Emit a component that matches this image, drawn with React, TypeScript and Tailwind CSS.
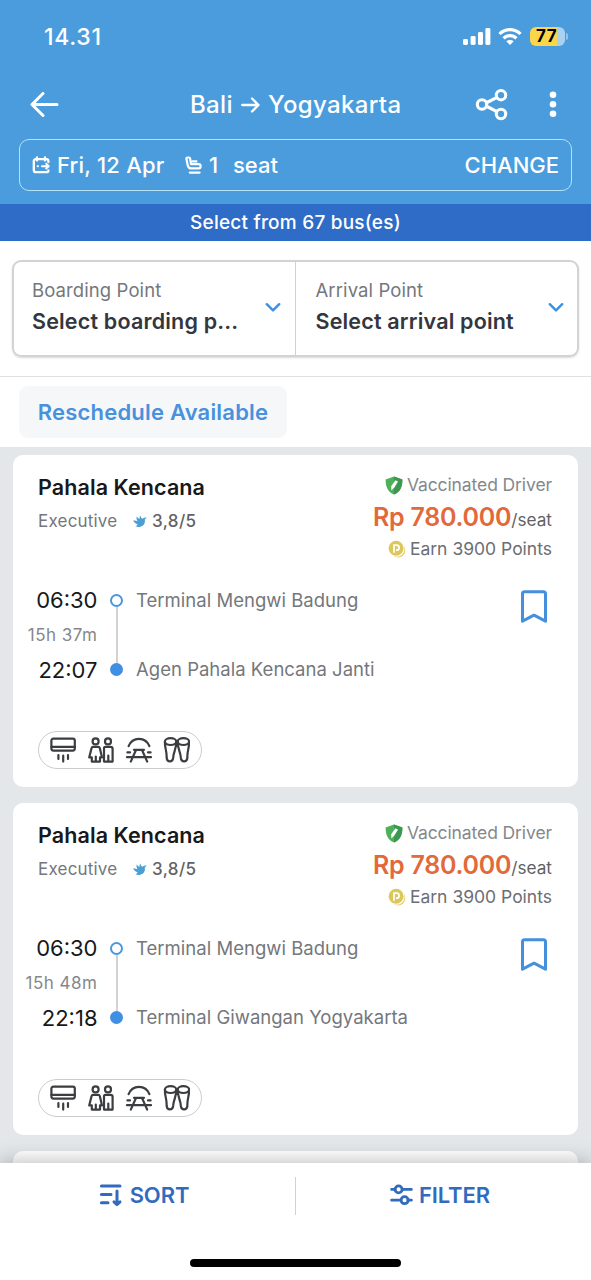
import type { ReactNode } from "react";

type Trip = {
  operator: string;
  busClass: string;
  rating: string;
  price: string;
  points: number;
  depart: string;
  arrive: string;
  duration: string;
  from: string;
  to: string;
};

const trips: Trip[] = [
  {
    operator: "Pahala Kencana",
    busClass: "Executive",
    rating: "3,8/5",
    price: "Rp 780.000",
    points: 3900,
    depart: "06:30",
    arrive: "22:07",
    duration: "15h 37m",
    from: "Terminal Mengwi Badung",
    to: "Agen Pahala Kencana Janti",
  },
  {
    operator: "Pahala Kencana",
    busClass: "Executive",
    rating: "3,8/5",
    price: "Rp 780.000",
    points: 3900,
    depart: "06:30",
    arrive: "22:18",
    duration: "15h 48m",
    from: "Terminal Mengwi Badung",
    to: "Terminal Giwangan Yogyakarta",
  },
];

function StatusBar() {
  return (
    <div className="flex h-[74px] items-center pl-11 pr-[23px] text-white">
      <span className="text-[23px] font-medium leading-7 tracking-[0.7px]">14.31</span>
      <div className="ml-auto flex items-center">
        <svg width="28" height="18" viewBox="0 0 28 18" fill="white">
          <rect x="0" y="11" width="5" height="6" rx="1.4" />
          <rect x="7.6" y="8" width="5" height="9" rx="1.4" />
          <rect x="15" y="4" width="5" height="13" rx="1.4" />
          <rect x="22.4" y="0" width="5" height="17" rx="1.4" />
        </svg>
        <svg className="ml-[7px]" width="24" height="18" viewBox="0 0 24 18" fill="none" stroke="white" strokeWidth="3.2">
          <path d="M1.5 6 C7.3 0.1 16.7 0.1 22.5 6" />
          <path d="M5.6 10.3 C9.2 6.7 14.8 6.7 18.4 10.3" />
          <path d="M12 17 L8.3 13.3 C10.4 11.4 13.6 11.4 15.7 13.3 Z" fill="white" stroke="none" />
        </svg>
        <div className="ml-[8px] flex items-center pb-px">
          <div className="flex h-[19px] w-[35px] items-center justify-center rounded-[6px] bg-linear-to-r from-[#fbd64b] from-77% to-[#a9d2f2] to-77% pr-[2px] text-[17px] font-bold leading-none tracking-[0.4px] text-black">
            77
          </div>
          <div className="ml-px h-[7px] w-[2px] rounded-r-full bg-[#93c4ec]" />
        </div>
      </div>
    </div>
  );
}

function Header() {
  return (
    <header className="h-[204px] bg-[#4a9cdc] text-white">
      <StatusBar />
      <div className="flex h-[62px] items-center pl-[30px] pr-[33px]">
        <svg width="29" height="26" viewBox="0 0 29 26" fill="none" stroke="white" strokeWidth="3" strokeLinecap="round" strokeLinejoin="round">
          <path d="M27 12.5 H2 M13 1.5 L2 12.5 L13 23.5" />
        </svg>
        <div className="ml-[131px] flex items-center text-[24px] font-medium leading-8 tracking-[0.35px]">
          <span className="w-[51px]">Bali</span>
          <svg width="19" height="16" viewBox="0 0 19 16" fill="none" stroke="white" strokeWidth="2.3" strokeLinecap="round" strokeLinejoin="round">
            <path d="M1.2 8 H17.5 M11 1.5 L17.5 8 L11 14.5" />
          </svg>
          <span className="ml-[8px]">Yogyakarta</span>
        </div>
        <svg className="ml-auto" width="34" height="34" viewBox="0 0 34 34" fill="none" stroke="white" strokeWidth="3.1">
          <path d="M11 15 L22 9.3 M11 18 L22 23.7" />
          <circle cx="7" cy="16.5" r="4.7" />
          <circle cx="26" cy="7.2" r="4.7" />
          <circle cx="26" cy="26" r="4.7" />
        </svg>
        <svg className="ml-[39px]" width="10" height="28" viewBox="0 0 10 28" fill="white">
          <circle cx="5" cy="3.8" r="3.3" />
          <circle cx="5" cy="13.3" r="3.3" />
          <circle cx="5" cy="22.8" r="3.3" />
        </svg>
      </div>
      <div className="mx-[19px] mt-[3px] flex h-[52px] items-center rounded-[10px] border border-[#b4e2f7] px-3 text-[22px] font-medium">
        <svg width="19" height="18" viewBox="0 0 19 18" fill="none" stroke="white" strokeWidth="2.3" strokeLinecap="round" strokeLinejoin="round">
          <path d="M16.4 6 V5.2 Q16.4 3.2 14.4 3.2 H3.8 Q1.8 3.2 1.8 5.2 V14 Q1.8 16.2 3.8 16.2 H14.4 Q16.4 16.2 16.4 14.4 M5 1.4 V4.6 M13 1.4 V4.6" />
          <path d="M10 10.2 H16.8 M14.2 7.8 L16.8 10.2 L14.2 12.6 M5.6 10.2 H6" strokeWidth="2" />
        </svg>
        <span className="ml-[6px] w-[128px] tracking-[0.2px]">Fri, 12 Apr</span>
        <svg width="17" height="19" viewBox="0 0 17 19" fill="none" stroke="white" strokeWidth="2.2" strokeLinecap="round" strokeLinejoin="round">
          <path d="M1.4 2.8 Q1.2 1.5 2.6 1.5 H4 Q5 1.5 5.2 2.8 L6 8.2 H13.6 Q15.6 8.2 15.6 10.2 Q15.6 12.4 13.6 12.4 H6.4 Q3.6 12.4 2.8 9.6 Z" />
          <path d="M7.4 5.4 H11.4 M4.8 16.6 H14.6" />
        </svg>
        <span className="ml-[7px] w-[24px]">1</span>
        <span>seat</span>
        <span className="ml-auto">CHANGE</span>
      </div>
    </header>
  );
}

function PointField({ label, value, className }: { label: string; value: string; className: string }) {
  return (
    <div className={`flex items-center pb-[3px] ${className}`}>
      <div className="min-w-0 flex-1 pb-[2px]">
        <div className="text-[18.5px] leading-6 tracking-[0.1px] text-[#74777c]">{label}</div>
        <div className="mt-[5px] whitespace-nowrap text-[21.5px] font-semibold leading-7 tracking-[0.18px] text-[#33363c]">{value}</div>
      </div>
      <svg width="16" height="10" viewBox="0 0 16 10" fill="none" stroke="#3f8fdf" strokeWidth="2.4" strokeLinecap="round" strokeLinejoin="round">
        <path d="M1.8 2.2 L8 8.4 L14.2 2.2" />
      </svg>
    </div>
  );
}

function ShieldIcon() {
  return (
    <svg width="18" height="19" viewBox="0 0 18 19">
      <path d="M9 0.5 L17.4 3.4 C17.4 11 15 16 9 18.5 C3 16 0.6 11 0.6 3.4 Z" fill="#4db257" />
      <path d="M9 0.5 L17.4 3.4 C17.4 11 15 16 9 18.5 Z" fill="#3c9850" />
      <path d="M6.4 14.6 L6.2 10.2 L10.4 4.2 L13 5.4 L9.4 11.4 Z" fill="white" />
    </svg>
  );
}

function PointsIcon() {
  return (
    <svg width="18" height="18" viewBox="0 0 18 18" fill="none">
      <circle cx="10" cy="10.4" r="7.2" fill="#e6cf62" />
      <circle cx="8.6" cy="8.8" r="7.9" fill="white" />
      <circle cx="8.1" cy="8.3" r="7.5" fill="#dcc85a" />
      <path d="M6 12.8 V5.2 H8.6 A2.5 2.5 0 0 1 8.6 10.2 H8" stroke="white" strokeWidth="1.7" />
    </svg>
  );
}

function BirdIcon() {
  return (
    <svg width="14" height="13" viewBox="0 0 14 13" fill="#4a9fd4">
      <path d="M0 5.6 Q2.4 5 4.6 6.2 Q3 4 3.6 1.4 Q5 3.2 6.6 4 Q6.2 2 7.2 0.4 Q8 2.8 9.4 3.8 Q11 2.2 13.8 2.4 L11.8 4.6 Q12.4 8.4 10 10.6 Q7 13 2.4 11.2 Q4 10.6 4.6 9.4 Q1.6 8.6 0 5.6 Z" />
    </svg>
  );
}

function Amenities() {
  return (
    <div className="ml-[25px] mt-12 flex h-[38px] w-[164px] items-center rounded-full border-[1.5px] border-[#cbcccd] pl-[11px]">
      <svg width="140" height="28" viewBox="0 0 140 28" fill="none" stroke="#3b3d40" strokeWidth="2.2" strokeLinecap="round" strokeLinejoin="round">
        {/* air conditioner */}
        <rect x="1.4" y="2.6" width="23.4" height="12" rx="2" />
        <path d="M1.4 10.8 H24.8 M8.4 19 V23 M13.2 19.6 V25.6 M18 19 V23" />
        {/* toilet */}
        <circle cx="45.6" cy="5.4" r="3" />
        <path d="M43 10.8 H48.2 Q49.4 10.8 49.8 12 L52 21.4 H50 V25.6 H41.8 V21.4 H39.2 L41.6 12 Q42 10.8 43 10.8 Z M45.8 20.6 V25.4" />
        <circle cx="58" cy="5.4" r="3" />
        <path d="M55.4 10.8 H60.6 Q62.6 10.8 62.6 12.8 V25.6 H54 V12.4 Q54 10.8 55.4 10.8 Z M58.3 19.6 V25.4" />
        {/* rest stop */}
        <path d="M78.6 10.2 C82.4 0.4 95.6 0.4 99.4 10.2 M84 13.8 H94 M77.4 16.4 H80 M98 16.4 H100.6 M77 21.2 H101 M86 14 L80.8 25.6 M92 14 L97.2 25.6" />
        {/* pillow and snacks */}
        <ellipse cx="120.6" cy="5.6" rx="5.7" ry="3.4" />
        <ellipse cx="133.4" cy="5.6" rx="5.7" ry="3.4" />
        <path d="M114.9 5.8 C114.6 12 117 15 116.6 21.4 C117 26.8 122.8 26.8 123.2 21.4 C123.4 16 126.4 13 126.3 5.8 M139.1 5.8 C139.4 12 137 15 137.4 21.4 C137 26.8 131.2 26.8 130.8 21.4 C130.6 16 127.6 13 127.7 5.8" />
      </svg>
    </div>
  );
}

function TripCard({ trip }: { trip: Trip }) {
  return (
    <article className="h-[332px] shrink-0 rounded-[10px] bg-white">
      <div className="flex h-[105px] justify-between pl-[25px] pr-[26px]">
        <div className="pt-[18px]">
          <h2 className="text-[21.5px] font-semibold leading-7 tracking-[0.1px] text-[#16181b]">{trip.operator}</h2>
          <div className="mt-[8px] flex items-center leading-6">
            <span className="w-[95px] text-[17px] tracking-[0.2px] text-[#74777c]">{trip.busClass}</span>
            <BirdIcon />
            <span className="ml-[5px] text-[17px] font-medium tracking-[0.4px] text-[#5f6267]">{trip.rating}</span>
          </div>
        </div>
        <div className="flex flex-col items-end pt-[18px]">
          <div className="flex items-center text-[17.5px] leading-6 tracking-[-0.1px] text-[#85888c]">
            <ShieldIcon />
            <span className="ml-1">Vaccinated Driver</span>
          </div>
          <div className="mt-[5px] flex h-[30px] items-baseline leading-[30px]">
            <span className="text-[25px] font-semibold tracking-[-0.25px] text-[#e2693a]">{trip.price}</span>
            <span className="text-[17.2px] text-[#5f6267]">/seat</span>
          </div>
          <div className="mt-[5px] flex items-center text-[17.5px] leading-6 text-[#6b6e73]">
            <PointsIcon />
            <span className="ml-1">Earn {trip.points} Points</span>
          </div>
        </div>
      </div>

      <div className="mt-[26px] flex h-[97px] pr-[30px]">
        <div className="w-[84.5px] text-right">
          <div className="text-[22px] leading-7 text-[#16181b]">{trip.depart}</div>
          <div className="mt-[9px] whitespace-nowrap text-[17px] leading-6 tracking-[0.5px] text-[#85888c]">{trip.duration}</div>
          <div className="mt-[9px] text-[22px] leading-7 text-[#16181b]">{trip.arrive}</div>
        </div>
        <div className="ml-[12.5px] flex w-[13px] flex-col items-center pb-[7px] pt-[8px]">
          <div className="size-[13px] shrink-0 rounded-full border-2 border-[#4a96df]" />
          <div className="w-[2px] flex-1 bg-[#d0d2d4]" />
          <div className="size-[13px] shrink-0 rounded-full bg-[#3f8fe4]" />
        </div>
        <div className="ml-[13px] flex flex-1 flex-col justify-between text-[18.5px] leading-7 tracking-[0.02px] text-[#74777c]">
          <span>{trip.from}</span>
          <span>{trip.to}</span>
        </div>
        <svg className="mt-[3px]" width="28" height="35" viewBox="0 0 28 35" fill="none" stroke="#4590dc" strokeWidth="3" strokeLinejoin="round">
          <path d="M2.5 4.8 Q2.5 2.7 4.6 2.7 H23.4 Q25.5 2.7 25.5 4.8 V32.2 L14 26.2 L2.5 32.2 Z" />
        </svg>
      </div>
      <Amenities />
    </article>
  );
}

function FooterButton({ label, children }: { label: string; children: ReactNode }) {
  return (
    <button className="flex flex-1 items-center justify-center gap-[6px] pb-[2px] pr-[7px] text-[22px] font-semibold leading-7 tracking-[-0.1px] text-[#326bbd]">
      {children}
      <span>{label}</span>
    </button>
  );
}

export default function App() {
  return (
    <div className="flex h-[1280px] w-[591px] flex-col overflow-hidden bg-[#e4e7ea] font-[Inter,'Liberation_Sans',sans-serif]">
      <Header />
      <div className="flex h-[37px] items-center justify-center bg-[#2f6cc7] pt-[2px] text-[19px] font-medium tracking-[0.22px] text-white">
        Select from 67 bus(es)
      </div>

      <section className="h-[136px] border-b border-[#dfe0e1] bg-white px-[12px] pt-[19px]">
        <div className="flex h-[97px] rounded-[9px] border-2 border-[#d2d3d4] shadow-[0_1px_2px_rgba(0,0,0,0.15)]">
          <PointField label="Boarding Point" value="Select boarding p..." className="w-[282px] border-r border-[#cfd0d1] pl-[18px] pr-[14px]" />
          <PointField label="Arrival Point" value="Select arrival point" className="flex-1 pl-[19.5px] pr-[13px]" />
        </div>
      </section>

      <section className="flex h-[70px] items-center bg-white pl-[19px]">
        <button className="h-[52px] w-[268px] rounded-[9px] bg-[#f6f7f9] text-[22px] font-semibold tracking-[0.2px] text-[#4791dd]">
          Reschedule Available
        </button>
      </section>

      <main className="flex h-[716px] flex-col gap-4 overflow-hidden px-[13px] pt-2">
        {trips.map((trip) => (
          <TripCard key={trip.arrive} trip={trip} />
        ))}
        <article className="h-[332px] shrink-0 rounded-[10px] bg-white" />
      </main>

      <footer className="relative h-[117px] shrink-0 bg-white shadow-[0_0_20px_rgba(0,0,0,0.3)]">
        <div className="flex h-[65px] items-center">
          <FooterButton label="SORT">
            <svg width="25" height="24" viewBox="0 0 25 24" fill="none" stroke="currentColor" strokeWidth="3" strokeLinecap="round" strokeLinejoin="round">
              <path d="M2.4 3 H21 M2.4 11.4 H12 M2.4 19.8 H9 M18 8 V21.5 M15 18.8 L18 21.6 L21 18.8" />
            </svg>
          </FooterButton>
          <div className="h-[38px] w-px bg-[#cfd1d4]" />
          <FooterButton label="FILTER">
            <svg width="23" height="22" viewBox="0 0 23 22" fill="none" stroke="currentColor" strokeWidth="2.8" strokeLinecap="round">
              <path d="M1.6 5.4 H5 M12.4 5.4 H21.4 M1.6 16.2 H10.4 M18 16.2 H21.4" />
              <circle cx="8.6" cy="5.4" r="3.5" />
              <circle cx="14.6" cy="16.2" r="3.5" />
            </svg>
          </FooterButton>
        </div>
        <div className="mx-auto mt-[31px] h-2 w-[211px] rounded-full bg-black" />
      </footer>
    </div>
  );
}
